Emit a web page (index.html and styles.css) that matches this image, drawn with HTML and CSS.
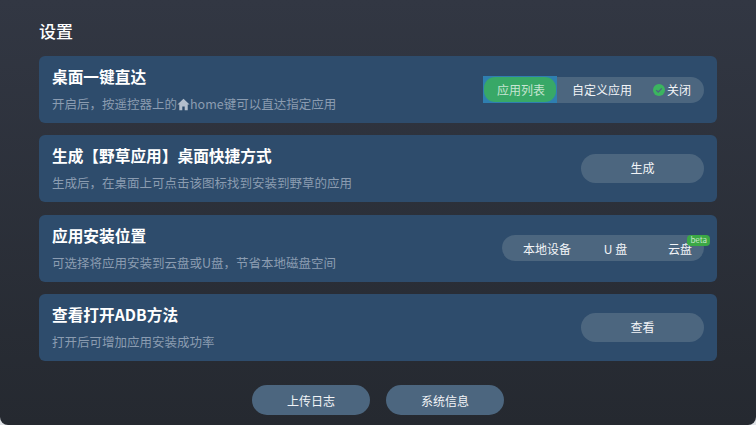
FILE: index.html
```html
<!DOCTYPE html>
<html lang="zh-CN">

<head>
    <meta charset="utf-8">
    <title>设置</title>
    <link rel="stylesheet" href="styles.css">
</head>

<body>
    <div class="panel">
        <h1>设置</h1>

        <section class="card">
            <div class="info">
                <h2>桌面一键直达</h2>
                <p>开启后，按遥控器上的<svg class="home" viewBox="0 0 12 12"><path d="M6 .8 .4 6h1.7v5.2h2.8V7.8h2.2v3.4h2.8V6h1.7z"/></svg>home键可以直达指定应用</p>
            </div>
            <div class="segments first">
                <div class="segment selected"><span>应用列表</span></div>
                <div class="segment custom">自定义应用</div>
                <div class="segment off">
                    <svg class="check" viewBox="0 0 12 12"><circle cx="6" cy="6" r="6"/><path d="M3.2 6.1 5.2 8 8.8 4.4"/></svg>关闭
                </div>
            </div>
        </section>

        <section class="card">
            <div class="info">
                <h2>生成【野草应用】桌面快捷方式</h2>
                <p>生成后，在桌面上可点击该图标找到安装到野草的应用</p>
            </div>
            <button type="button" class="action">生成</button>
        </section>

        <section class="card">
            <div class="info">
                <h2>应用安装位置</h2>
                <p>可选择将应用安装到云盘或U盘，节省本地磁盘空间</p>
            </div>
            <div class="segments second">
                <div class="segment">本地设备</div>
                <div class="segment usb">U 盘</div>
                <div class="segment">云盘<span class="beta">beta</span></div>
            </div>
        </section>

        <section class="card">
            <div class="info">
                <h2>查看打开ADB方法</h2>
                <p>打开后可增加应用安装成功率</p>
            </div>
            <button type="button" class="action">查看</button>
        </section>

        <div class="footer">
            <button type="button" class="action">上传日志</button>
            <button type="button" class="action">系统信息</button>
        </div>
    </div>
</body>

</html>
```

FILE: styles.css
```css
html,
body {
    margin: 0;
    padding: 0;
    height: 425px;
    overflow: hidden;
    background-color: #dfe2e6;
    font-family: "Noto Sans CJK SC", "Noto Sans", sans-serif;
}

.panel {
    box-sizing: border-box;
    height: 425px;
    padding: 18px 39px 0;
    background: linear-gradient(180deg, #323743 0%, #252930 100%);
    border-radius: 0 0 8px 8px;
}

h1 {
    margin: 0 0 13px;
    font-size: 17px;
    line-height: 25px;
    font-weight: 500;
    color: #fff;
}

.card {
    display: flex;
    align-items: center;
    justify-content: space-between;
    box-sizing: border-box;
    height: 67px;
    margin-bottom: 12.4px;
    padding: 0 13px;
    background-color: #2e4c6c;
    border-radius: 6px;
}

h2 {
    margin: 0 0 7px;
    font-size: 15.7px;
    line-height: 22px;
    font-weight: 700;
    color: #fff;
}

.info p {
    display: flex;
    align-items: center;
    margin: 0;
    font-size: 12.5px;
    line-height: 18px;
    color: #8b9cb1;
}

.home {
    width: 13px;
    height: 13px;
    fill: #b4bfcc;
}

.segments {
    display: flex;
    align-items: center;
    height: 26px;
    background-color: #4c667f;
    border-radius: 13px;
    font-size: 12px;
    color: #f2f4f7;
}

.segments.first {
    width: 221px;
}

.segments.second {
    width: 202px;
    justify-content: space-between;
    padding: 0 12px 0 21px;
    box-sizing: border-box;
}

.segment {
    position: relative;
    white-space: nowrap;
}

.usb {
    margin-right: 8px;
}

.selected {
    box-sizing: border-box;
    width: 74px;
    height: 27px;
    padding: 1px;
    background-color: #2f7fb0;
}

.selected span {
    display: flex;
    align-items: center;
    justify-content: center;
    height: 100%;
    padding-left: 2px;
    box-sizing: border-box;
    background-color: #38a867;
    border-radius: 11px;
    color: #c6e5d2;
}

.custom {
    margin-left: 15px;
}

.off {
    display: flex;
    align-items: center;
    margin-left: 21px;
}

.check {
    width: 12px;
    height: 12px;
    margin-right: 2px;
}

.check circle {
    fill: #3bb55f;
}

.check path {
    fill: none;
    stroke: #4c667f;
    stroke-width: 1.3;
}

.beta {
    position: absolute;
    top: -5px;
    right: -18px;
    height: 11px;
    padding: 0 3px;
    background-color: #3ba845;
    border-radius: 4px;
    font-size: 8px;
    line-height: 10px;
    color: #c5e6c9;
}

.action {
    width: 123px;
    height: 29px;
    padding: 0 0 2px;
    border: none;
    border-radius: 15px;
    background-color: #4c667f;
    font-family: inherit;
    font-size: 12px;
    color: #f2f4f7;
}

.footer {
    display: flex;
    justify-content: center;
    gap: 16px;
    margin-top: 24px;
}

.footer .action {
    width: 118px;
    height: 30px;
    padding: 0;
}
```
